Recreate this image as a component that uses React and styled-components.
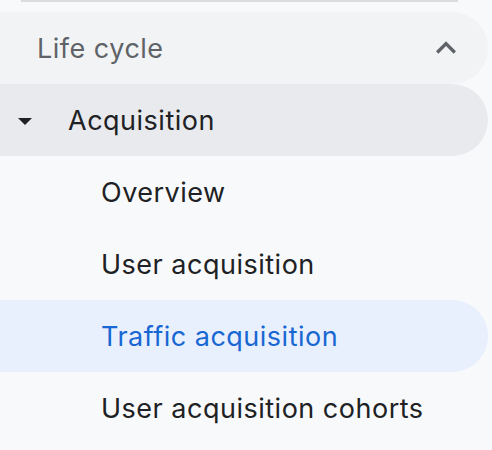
import React from "react";
import styled, { createGlobalStyle } from "styled-components";

const GlobalStyle = createGlobalStyle`
  body {
    margin: 0;
    background: #f8f9fa;
    font-family: Inter, Roboto, "Noto Sans", Arial, sans-serif;
  }
`;

// the nav entries under Acquisition
const children = [
  { text: "Overview" },
  { text: "User acquisition" },
  { text: "Traffic acquisition", active: true },
  { text: "User acquisition cohorts" },
];

const Nav = styled.nav`
  width: 488px;
  display: flex;
  flex-direction: column;
`;

const Divider = styled.div`
  height: 2px;
  margin: 0 30px 10px 21px;
  background: #dadce0;
`;

const Row = styled.div`
  height: 72px;
  display: flex;
  align-items: center;
  border-radius: 0 36px 36px 0;
  background: ${(p) => p.$bg || "transparent"};
  color: ${(p) => p.$color || "#202124"};
  font-size: 27px;
  padding-left: ${(p) => p.$indent}px;
  padding-right: 22px;
`;

const Label = styled.span`
  flex: 1;
  letter-spacing: 0.5px;
`;

const Caret = styled.span`
  width: 0;
  height: 0;
  border-left: 7px solid transparent;
  border-right: 7px solid transparent;
  border-top: 7px solid #202124;
  margin: 2px 36px 0 0;
`;

const ChevronUp = () => (
  <svg width="40" height="40" viewBox="0 0 24 24" fill="#5f6368">
    <path d="M12 8l-6 6 1.41 1.41L12 10.83l4.59 4.58L18 14z" />
  </svg>
);

const App = () => {
  return (
    <>
      <GlobalStyle />
      <Nav>
        <Divider />
        <Row $bg="#f1f3f4" $color="#5f6368" $indent={37}>
          <Label>Life cycle</Label>
          <ChevronUp />
        </Row>
        <Row $bg="#e8eaed" $indent={18}>
          <Caret />
          <Label>Acquisition</Label>
        </Row>
        {children.map((c) => (
          <Row
            key={c.text}
            $indent={101}
            $bg={c.active ? "#e8f0fe" : undefined}
            $color={c.active ? "#1967d2" : undefined}
          >
            <Label>{c.text}</Label>
          </Row>
        ))}
      </Nav>
    </>
  );
};

export default App;
